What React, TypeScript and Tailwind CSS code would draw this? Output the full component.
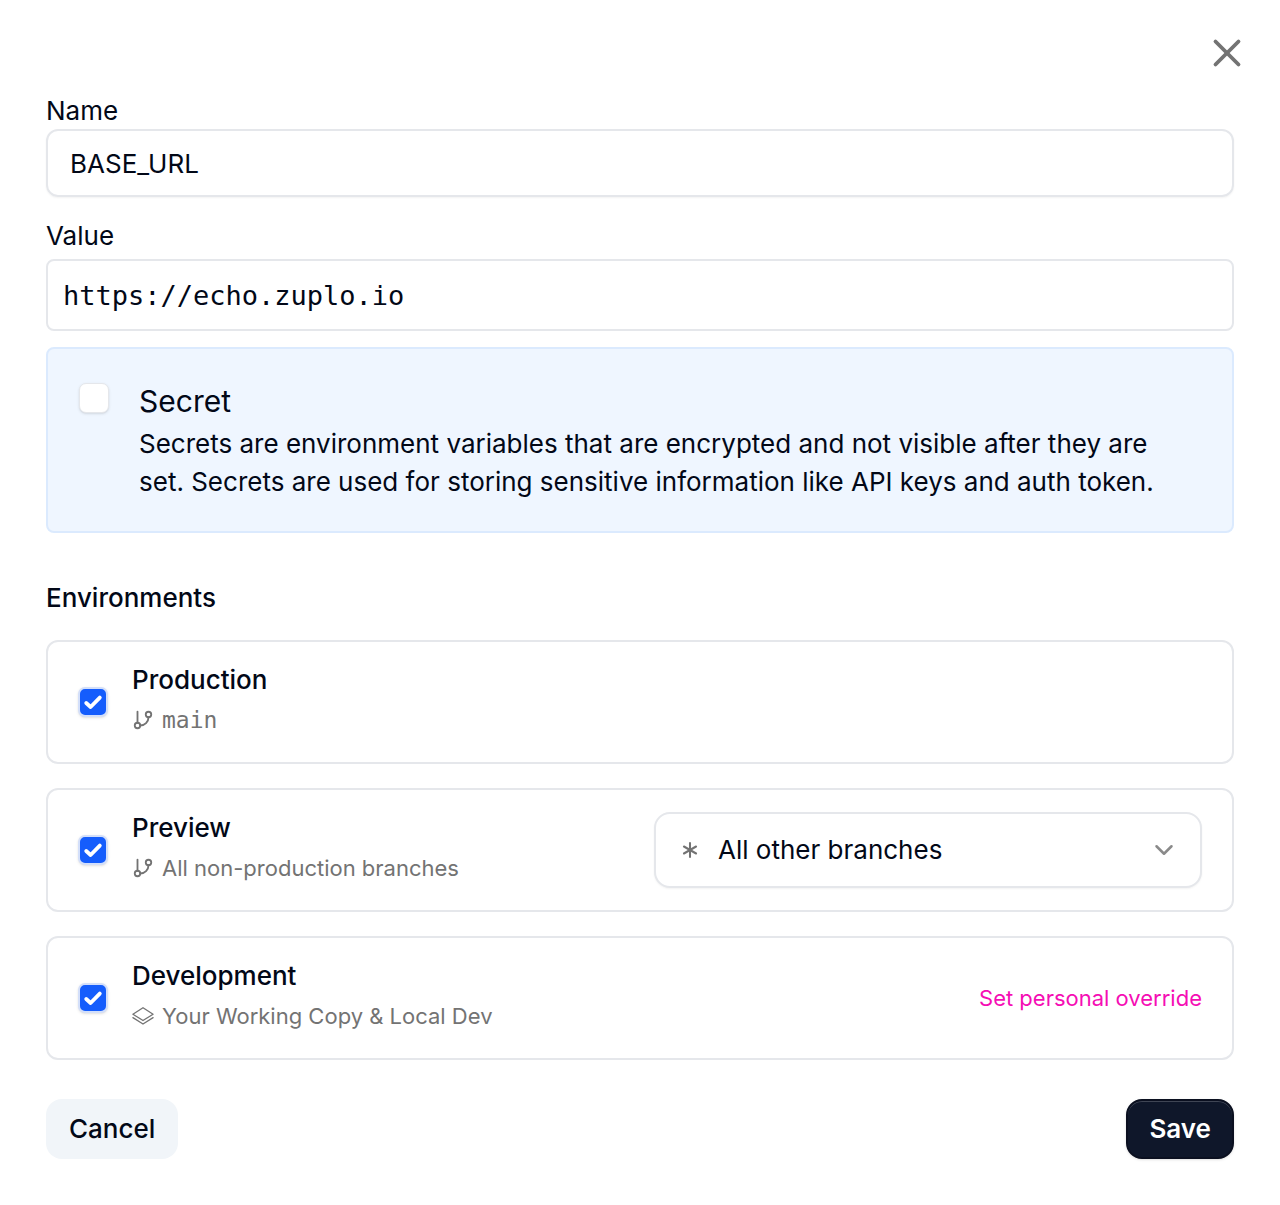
import React, { useState } from "react";
import { Asterisk, ChevronDown, GitBranch, X } from "lucide-react";

function CheckBox({
  id,
  checked,
  onChange,
}: {
  id: string;
  checked: boolean;
  onChange: (checked: boolean) => void;
}) {
  return (
    <span className="relative block size-[30px] shrink-0">
      <input
        id={id}
        type="checkbox"
        checked={checked}
        onChange={(e) => onChange(e.target.checked)}
        className="peer block size-full appearance-none rounded-[7px] border border-gray-200 bg-white shadow-sm checked:border-2 checked:border-[#d3dffa] checked:bg-[#155dfc]"
      />
      <svg
        viewBox="0 0 30 30"
        fill="none"
        stroke="white"
        strokeWidth="3.8"
        strokeLinecap="round"
        strokeLinejoin="round"
        className="pointer-events-none absolute inset-0 hidden peer-checked:block"
      >
        <path d="M8.2 16 12.6 20 21.8 10.6" />
      </svg>
    </span>
  );
}

function BranchIcon() {
  return <GitBranch className="size-[22px] shrink-0" strokeWidth={2} />;
}

function LayersIcon() {
  return (
    <svg
      viewBox="0 0 24 24"
      fill="none"
      stroke="currentColor"
      strokeWidth="1.4"
      strokeLinecap="round"
      strokeLinejoin="round"
      className="size-[22px] shrink-0"
    >
      <path d="M12 3 23 10 12 17 1 10Z" />
      <path d="M1 13.8 12 20.8 23 13.8" />
    </svg>
  );
}

function EnvironmentCard({
  id,
  title,
  icon,
  description,
  children,
}: {
  id: string;
  title: string;
  icon: React.ReactNode;
  description: React.ReactNode;
  children?: React.ReactNode;
}) {
  const [checked, setChecked] = useState(true);

  return (
    <div className="flex items-center justify-between rounded-xl border-2 border-gray-200 px-[30px] py-[22px]">
      <div className="flex items-center gap-6">
        <CheckBox id={id} checked={checked} onChange={setChecked} />
        <div className="pb-[2px]">
          <label htmlFor={id} className="block text-[26px] leading-8 font-medium">
            {title}
          </label>
          <div className="mt-[6px] flex items-center gap-2 text-[22px] leading-9 text-[#737373]">
            {icon}
            {description}
          </div>
        </div>
      </div>
      {children}
    </div>
  );
}

export default function App() {
  const [name, setName] = useState("BASE_URL");
  const [value, setValue] = useState("https://echo.zuplo.io");
  const [secret, setSecret] = useState(false);

  return (
    <form
      onSubmit={(e) => e.preventDefault()}
      className="bg-white px-[46px] pt-[30px] pb-[46px] font-[Inter,sans-serif] text-[26px] leading-9 text-[#020817]"
    >
      <div className="-mr-4 flex justify-end">
        <button type="button" aria-label="Close" className="text-[#737373]">
          <X className="size-[46px]" strokeWidth={2} />
        </button>
      </div>

      <div className="mt-[17px]">
        <label htmlFor="name" className="block">
          Name
        </label>
        <input
          id="name"
          type="text"
          value={name}
          onChange={(e) => setName(e.target.value)}
          className="block h-[68px] w-full rounded-xl border-2 border-gray-200 px-[22px] shadow-xs"
        />
      </div>

      <div className="mt-[21px]">
        <label htmlFor="value" className="block">
          Value
        </label>
        <input
          id="value"
          type="text"
          value={value}
          onChange={(e) => setValue(e.target.value)}
          className="mt-[5px] block h-[72px] w-full rounded-lg border-2 border-gray-200 px-[15px] font-['DejaVu_Sans_Mono',monospace] text-[27px]"
        />
      </div>

      <div className="mt-4 flex gap-[30px] rounded-lg border-2 border-blue-100 bg-[#eff6ff] pt-[34px] pr-12 pb-[30px] pl-[31px]">
        <CheckBox id="secret" checked={secret} onChange={setSecret} />
        <div>
          <label htmlFor="secret" className="block text-[30px] leading-9">
            Secret
          </label>
          <p className="mt-[6px] leading-[38px]">
            Secrets are environment variables that are encrypted and not visible after they are set. Secrets are
            used for storing sensitive information like API keys and auth token.
          </p>
        </div>
      </div>

      <h2 className="mt-[47px] font-medium">Environments</h2>

      <div className="mt-6 flex flex-col gap-6">
        <EnvironmentCard
          id="production"
          title="Production"
          icon={<BranchIcon />}
          description={<span className="font-['DejaVu_Sans_Mono',monospace] text-[23px]">main</span>}
        />
        <EnvironmentCard
          id="preview"
          title="Preview"
          icon={<BranchIcon />}
          description="All non-production branches"
        >
          <div className="relative w-[548px]">
            <select
              aria-label="Preview branches"
              className="block h-[76px] w-full appearance-none rounded-2xl border-2 border-gray-200 bg-white pl-[62px] shadow-xs"
            >
              <option>All other branches</option>
            </select>
            <Asterisk
              className="pointer-events-none absolute top-6 left-[22px] size-7 text-[#737373]"
              strokeWidth={1.75}
            />
            <ChevronDown className="pointer-events-none absolute top-[23px] right-[23px] size-[30px] text-[#8a8a8a]" />
          </div>
        </EnvironmentCard>
        <EnvironmentCard
          id="development"
          title="Development"
          icon={<LayersIcon />}
          description="Your Working Copy & Local Dev"
        >
          <button type="button" className="text-[22px] text-[#f50db4]">
            Set personal override
          </button>
        </EnvironmentCard>
      </div>

      <div className="mt-[39px] flex justify-between">
        <button type="button" className="h-[60px] rounded-2xl bg-slate-100 px-[23px] font-medium">
          Cancel
        </button>
        <button
          type="submit"
          className="h-[60px] rounded-2xl border-2 border-[#0b1020] bg-[#0f172a] px-[21px] font-semibold text-white shadow-sm inset-shadow-[0_1px_0_rgba(255,255,255,0.2)]"
        >
          Save
        </button>
      </div>
    </form>
  );
}
